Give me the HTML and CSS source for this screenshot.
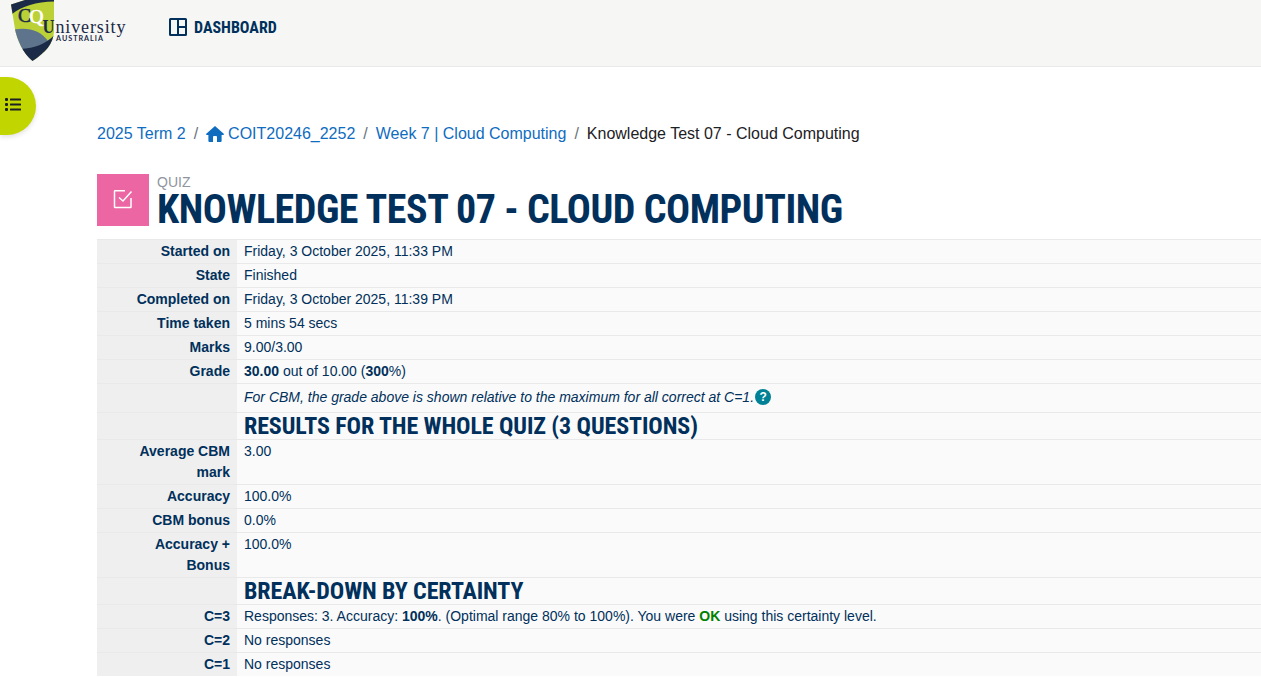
FILE: index.html
```
<!DOCTYPE html>
<html lang="en">
<head>
<meta charset="utf-8">
<title>Knowledge Test 07 - Cloud Computing</title>
<link rel="stylesheet" href="styles.css">
</head>
<body>
<header class="topbar">
  <svg class="logo" width="120" height="66" viewBox="0 0 120 66" role="img" aria-label="CQUniversity Australia">
    <clipPath id="shield"><path d="M1 4.500L15 0H44V32C43 44 36 52 22.500 61C13 53 7 40 5 29Z"/></clipPath>
    <g clip-path="url(#shield)">
      <rect width="50" height="66" fill="#bbd135"/>
      <path d="M0 0H44V1.500C26 2 12 6 2 14H0Z" fill="#1b2a47"/>
      <path d="M4 29.500C19 27 31 31 38 41L24 60H4Z" fill="#5e738c"/>
      <path d="M50 28C42 40 30 48 10 49V66H50Z" fill="#1b2a47"/>
    </g>
    <text class="logo-serif" x="8" y="22" font-size="18" textLength="13" lengthAdjust="spacingAndGlyphs" fill="#1b2a47" stroke="#1b2a47" stroke-width=".5">C</text>
    <text class="logo-serif" x="19.500" y="23" font-size="19" textLength="14" lengthAdjust="spacingAndGlyphs" fill="#fff" stroke="#fff" stroke-width=".7">Q</text>
    <text class="logo-serif logo-bold" x="32.500" y="33" font-size="18" textLength="12" lengthAdjust="spacingAndGlyphs" fill="#1b2a47">U</text>
    <text class="logo-serif" x="45.500" y="33" font-size="18" textLength="70" lengthAdjust="spacing" fill="#1b2a47">niversity</text>
    <text class="logo-sans" x="46" y="41" font-size="7.200" textLength="47" lengthAdjust="spacing" fill="#1b2a47">AUSTRALIA</text>
  </svg>
  <a class="dash">
    <svg width="18" height="18" viewBox="0 0 18 18" fill="none" stroke="#00305b" stroke-width="2"><rect x="1" y="1" width="16" height="16" rx=".5"/><path d="M9 1V17M9 9H17"/></svg>
    <span>DASHBOARD</span>
  </a>
</header>
<button class="drawer" aria-label="Open course index">
  <svg width="16" height="14" viewBox="0 0 16 14" fill="#1d2125"><rect x="0" y="0" width="3" height="3" rx="1"/><rect x="0" y="5" width="3" height="3" rx="1"/><rect x="0" y="10" width="3" height="3" rx="1"/><rect x="5" y=".6" width="11" height="2" rx=".5"/><rect x="5" y="5.6" width="11" height="2" rx=".5"/><rect x="5" y="10.6" width="11" height="2" rx=".5"/></svg>
</button>
<main class="page">
  <nav class="crumbs">
    <a>2025 Term 2</a><i>/</i><a><svg class="home" width="18" height="16" viewBox="0 0 18 16"><path d="M9 0L18 8Q18 9 17 9H15.600V15Q15.600 16 14.600 16H11V11Q11 10 10 10H8Q7 10 7 11V16H3.400Q2.400 16 2.400 15V9H1Q0 9 0 8Z" fill="#0f6cbf"/></svg>COIT20246_2252</a><i>/</i><a>Week 7 | Cloud Computing</a><i>/</i><span>Knowledge Test 07 - Cloud Computing</span>
  </nav>
  <div class="heading">
    <div class="tile">
      <svg width="20" height="20" viewBox="0 0 20 20" fill="none" stroke="#fff" stroke-width="1.500"><path d="M12 1.700H2Q1.500 1.700 1.500 2.200V18Q1.500 18.500 2 18.500H17.500Q18 18.500 18 18V9M6 8.500L10 12L18.500 2.500"/></svg>
    </div>
    <div><div class="kind">QUIZ</div><h1>KNOWLEDGE TEST 07 - CLOUD COMPUTING</h1></div>
  </div>
  <table class="summary">
    <tr><th>Started on</th><td>Friday, 3 October 2025, 11:33 PM</td></tr>
    <tr><th>State</th><td>Finished</td></tr>
    <tr><th>Completed on</th><td>Friday, 3 October 2025, 11:39 PM</td></tr>
    <tr><th>Time taken</th><td>5 mins 54 secs</td></tr>
    <tr><th>Marks</th><td>9.00/3.00</td></tr>
    <tr><th>Grade</th><td><b>30.00</b> out of 10.00 (<b>300</b>%)</td></tr>
    <tr class="note"><th></th><td><div><em>For CBM, the grade above is shown relative to the maximum for all correct at C=1.</em><span class="help">?</span></div></td></tr>
    <tr class="section"><th></th><td><h3>RESULTS FOR THE WHOLE QUIZ (3 QUESTIONS)</h3></td></tr>
    <tr><th>Average CBM mark</th><td>3.00</td></tr>
    <tr><th>Accuracy</th><td>100.0%</td></tr>
    <tr><th>CBM bonus</th><td>0.0%</td></tr>
    <tr><th>Accuracy + Bonus</th><td>100.0%</td></tr>
    <tr class="section"><th></th><td><h3>BREAK-DOWN BY CERTAINTY</h3></td></tr>
    <tr><th>C=3</th><td>Responses: 3. Accuracy: <b>100%</b>. (Optimal range 80% to 100%). You were <b class="ok">OK</b> using this certainty level.</td></tr>
    <tr><th>C=2</th><td>No responses</td></tr>
    <tr><th>C=1</th><td>No responses</td></tr>
  </table>
</main>
</body>
</html>
```
FILE: styles.css
```
* { box-sizing: border-box; }
body { margin: 0; height: 677px; overflow: hidden; background: #fff; color: #00305b; font: 14px/21px "Liberation Sans", Arial, sans-serif; }
.topbar { height: 67px; display: flex; align-items: flex-start; padding-left: 10px; background: #f6f6f4; border-bottom: 1px solid #e9e9e9; }
.logo { display: block; overflow: visible; }
.logo-serif { font-family: "Liberation Serif", serif; }
.logo-bold { font-weight: bold; }
.logo-sans { font-family: Lato, sans-serif; font-weight: bold; }
.dash { display: flex; align-items: center; gap: 7px; height: 18px; margin: 18px 0 0 39px; font: 700 16px/18px "Roboto Condensed", Roboto, sans-serif; font-stretch: 75%; }
.dash span { padding-top: 2px; }
.drawer { position: absolute; left: 0; top: 77px; width: 36px; height: 58px; padding: 0 0 2px 5px; display: flex; align-items: center; border: 0; border-radius: 0 29px 29px 0; background: #c1d500; box-shadow: 0 2px 5px rgba(0,0,0,.12); }
.page { padding: 55px 0 0 97px; }
.crumbs { display: flex; height: 24px; font-size: 16px; line-height: 24px; color: #1d2125; white-space: nowrap; }
.crumbs a { color: #0f6cbf; display: flex; align-items: center; }
.crumbs i { font-style: normal; color: #6a737b; padding: 0 8px; }
.home { margin-right: 4px; }
.heading { display: flex; margin-top: 28px; height: 65px; }
.tile { width: 52px; height: 52px; margin-right: 8px; padding-bottom: 2px; display: flex; align-items: center; justify-content: center; background: #eb66a2; }
.kind { font-size: 14px; line-height: 16px; height: 16px; color: #8f959e; }
h1, h3 { margin: 0; font-family: "Roboto Condensed", Roboto, sans-serif; font-stretch: 75%; font-weight: 700; white-space: nowrap; }
h1 { font-size: 40px; line-height: 40px; letter-spacing: -.46px; }
h3 { font-size: 24px; line-height: 26px; height: 26px; letter-spacing: -.1px; }
.summary { width: 1164px; table-layout: fixed; border-collapse: separate; border-spacing: 0; }
.summary th, .summary td { border-top: 1px solid #e9e9e9; padding: 1px 7px; vertical-align: top; }
.summary th { width: 140px; padding-left: 14px; text-align: right; background: #efefef; }
.summary td { background: #fafafa; }
.summary .section th, .summary .section td { padding-top: 0; padding-bottom: 0; }
.note div { display: flex; align-items: center; height: 26px; padding-bottom: 2px; }
.help { width: 16px; height: 16px; margin-left: 1px; border-radius: 50%; background: #008196; color: #fff; font-weight: bold; font-size: 12px; line-height: 16px; text-align: center; }
.ok { color: #008000; }
```
